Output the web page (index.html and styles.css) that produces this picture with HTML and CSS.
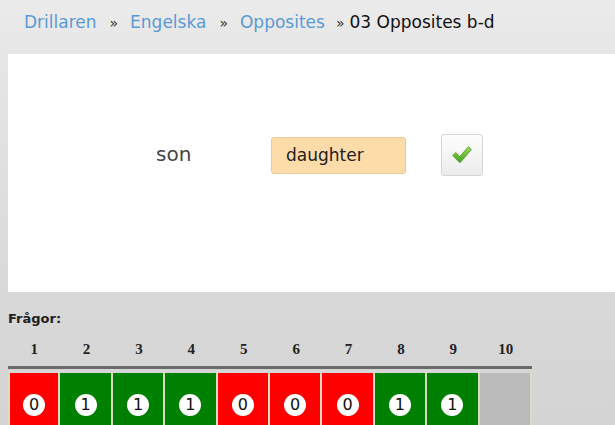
FILE: index.html
```html
<!DOCTYPE html>
<html>
<head>
<meta charset="utf-8">
<link rel="stylesheet" href="styles.css">
</head>
<body>
<div class="crumbs">
  <a href="#">Drillaren</a><span class="sep">»</span><a href="#">Engelska</a><span class="sep">»</span><a href="#">Opposites</a><span class="sep last">»</span><span class="current">03 Opposites b-d</span>
</div>
<div class="panel">
  <div class="word">son</div>
  <div class="answer">daughter</div>
  <button class="check" type="button">
    <svg width="22" height="20" viewBox="0 0 20 18">
      <defs>
        <linearGradient id="g" x1="0" y1="0" x2="0" y2="1">
          <stop offset="0" stop-color="#9be05a"/>
          <stop offset="1" stop-color="#3f9e1c"/>
        </linearGradient>
      </defs>
      <path d="M1.5 9.5 L4.5 6.8 L8 10.5 L15.8 1.5 L18.5 4 L8.2 16 Z" fill="url(#g)" stroke="#4c9a2a" stroke-width="0.8" stroke-linejoin="round"/>
    </svg>
  </button>
</div>
<div class="questions">
  <div class="label">Frågor:</div>
  <table class="grid">
    <thead>
      <tr><th>1</th><th>2</th><th>3</th><th>4</th><th>5</th><th>6</th><th>7</th><th>8</th><th>9</th><th>10</th></tr>
    </thead>
    <tbody>
      <tr>
        <td class="bad"><span class="dot">0</span></td>
        <td class="good"><span class="dot">1</span></td>
        <td class="good"><span class="dot">1</span></td>
        <td class="good"><span class="dot">1</span></td>
        <td class="bad"><span class="dot">0</span></td>
        <td class="bad"><span class="dot">0</span></td>
        <td class="bad"><span class="dot">0</span></td>
        <td class="good"><span class="dot">1</span></td>
        <td class="good"><span class="dot">1</span></td>
        <td class="none"></td>
      </tr>
    </tbody>
  </table>
</div>
</body>
</html>
```

FILE: styles.css
```css
html, body {
  margin: 0;
  padding: 0;
}
body {
  width: 615px;
  height: 425px;
  overflow: hidden;
  background: linear-gradient(#ebebeb 0, #e6e6e6 54px, #d8d8d8 300px, #d4d4d4 425px);
  font-family: "DejaVu Sans", Verdana, sans-serif;
}
.crumbs {
  height: 54px;
  box-sizing: border-box;
  padding: 12px 0 0 24px;
  font-size: 17px;
  line-height: 21px;
  color: #111;
  white-space: nowrap;
}
.crumbs a {
  color: #5a9ad6;
  text-decoration: none;
}
.crumbs .sep {
  display: inline-block;
  margin: 0 12px 0 13px;
  color: #333;
  font-size: 14px;
}
.crumbs .sep.last {
  margin: 0 5px 0 11px;
}
.panel {
  margin-left: 8px;
  height: 238px;
  background: #fff;
  display: flex;
  align-items: flex-start;
  padding: 80px 0 0 148px;
  box-sizing: border-box;
}
.word {
  font-size: 20px;
  color: #444;
  width: 115px;
  margin-top: 8px;
}
.answer {
  width: 135px;
  height: 37px;
  box-sizing: border-box;
  background: #fddcaa;
  border: 1px solid #ecc998;
  border-radius: 3px;
  font-size: 17px;
  color: #222;
  line-height: 35px;
  padding-left: 14px;
  margin-top: 3px;
}
.check {
  margin-left: 35px;
  width: 42px;
  height: 42px;
  box-sizing: border-box;
  border: 1px solid #d6d6d6;
  border-radius: 3px;
  background: linear-gradient(#fdfdfd, #ececec);
  display: flex;
  align-items: center;
  justify-content: center;
  padding: 0;
  margin-top: 0;
}
.questions {
  padding: 18px 0 0 8px;
}
.label {
  font-weight: bold;
  font-size: 13px;
  color: #222;
  line-height: 18px;
}
.grid {
  border-collapse: separate;
  border-spacing: 0;
  margin-top: 8px;
  width: 524px;
  table-layout: fixed;
}
.grid th {
  font-family: "Liberation Serif", "Times New Roman", serif;
  font-weight: bold;
  font-size: 15px;
  color: #222;
  height: 26px;
  padding: 0 0 4px;
  border-bottom: 3px solid #6b6b6b;
  vertical-align: middle;
}
.grid td {
  height: 62px;
  padding: 0;
  border: 2px solid #dcdcc4;
  border-top-width: 4px;
  border-top-color: #d6d6d6;
  border-bottom: none;
  text-align: center;
  vertical-align: top;
  padding-top: 21px;
  box-sizing: border-box;
}
.grid td + td {
  border-left-width: 0;
}
.grid td.bad { background: #ff0000; }
.grid td.good { background: #008000; }
.grid td.none { background: #bbbbbb; }
.dot {
  display: inline-block;
  width: 22px;
  height: 22px;
  border-radius: 50%;
  background: #fff;
  color: #111;
  font-size: 16px;
  line-height: 22px;
  text-align: center;
}
```
